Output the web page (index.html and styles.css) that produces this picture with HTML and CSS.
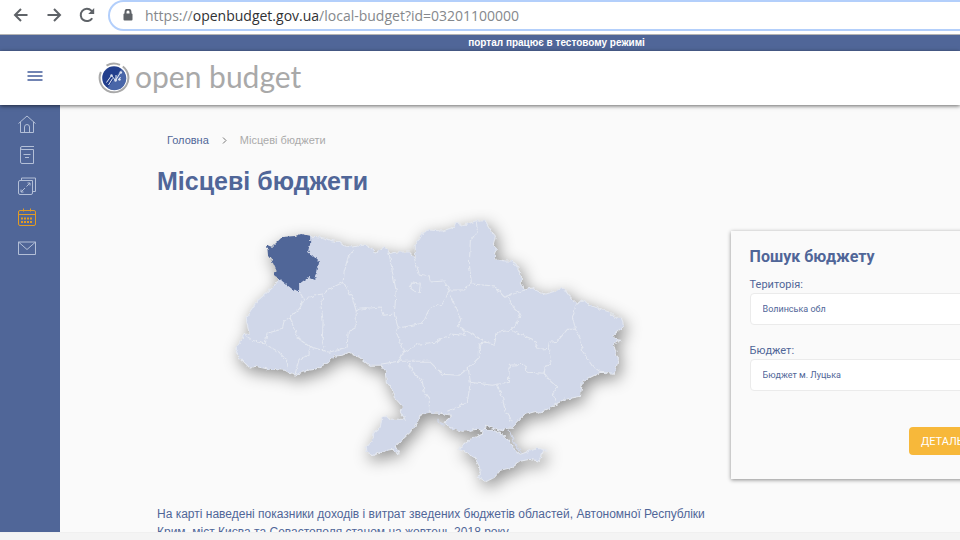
FILE: index.html
```html
<!DOCTYPE html>
<html lang="uk">
<head>
<meta charset="utf-8">
<title>Open Budget</title>
<link rel="stylesheet" href="styles.css">
</head>
<body>
<div class="browser">
  <button class="tool" aria-label="Назад"><svg width="16" height="16" viewBox="0 0 16 16"><path d="M14.500 8H2M8 2L2 8l6 6"/></svg></button>
  <button class="tool" aria-label="Вперед"><svg width="16" height="16" viewBox="0 0 16 16"><path d="M1.500 8H14M8 2l6 6-6 6"/></svg></button>
  <button class="tool" aria-label="Оновити"><svg width="16" height="16" viewBox="0 0 16 16"><path d="M13.200 11.200A6.200 6.200 0 1 1 12.400 3.600L14 5.400"/><path class="solid" d="M15.200 1v6H9.200z"/></svg></button>
  <div class="address">
    <svg class="lock" width="10" height="12" viewBox="0 0 10 12"><rect x="0.500" y="4.500" width="9" height="7" rx="1"/><path d="M2.500 5V3a2.500 2.500 0 0 1 5 0v2"/></svg>
    <span class="url">https://<b>openbudget.gov.ua</b>/local-budget?id=03201100000</span>
  </div>
</div>
<div class="notice">портал працює в тестовому режимі</div>
<header class="header">
  <button class="menu" aria-label="Меню"><svg width="16" height="12" viewBox="0 0 16 12"><path d="M0.500 2h15M0.500 6h15M0.500 10h15"/></svg></button>
  <a class="logo" href="#">
    <svg width="32" height="32" viewBox="0 0 32 32">
      <path class="ring" d="M8.500 3.600A14.400 14.400 0 0 1 22 2.900M24.800 4.500A14.400 14.400 0 1 1 2.900 10"/>
      <circle class="disc" cx="16" cy="16" r="11.800"/>
      <path class="shade" d="M9.500 25.900L23.500 6.900A11.800 11.800 0 0 1 9.500 25.900z"/>
      <path class="graph" d="M8.500 20.500l5-7M10.500 23l4-6.500M13.500 13.500l4 5 5-8M18 13v6M22.500 15l-2 3"/>
      <g class="nodes"><circle cx="13.500" cy="13.500" r="1.200"/><circle cx="17.500" cy="18.500" r="1.200"/><circle cx="22.800" cy="10.500" r="1.300"/><circle cx="21.500" cy="17.500" r="1.200"/></g>
    </svg>
    <span>open budget</span>
  </a>
</header>
<div class="body">
  <nav class="side">
    <a href="#" aria-label="Головна"><svg width="18" height="18" viewBox="0 0 18 18"><path d="M0.500 8.500L9 1l8.500 7.500M2.500 7v10.500h13V7M6.500 17.500V12a2.500 2.500 0 0 1 5 0v5.500"/></svg></a>
    <a href="#" aria-label="Документи"><svg width="18" height="18" viewBox="0 0 18 18"><path d="M16 .500H4a1.500 1.500 0 0 0 0 3h11.500v14H4A1.500 1.500 0 0 1 2.500 16V2M5.500 8.500h7M7 11.500h4"/></svg></a>
    <a href="#" aria-label="Порівняння"><svg width="18" height="18" viewBox="0 0 18 18"><path d="M.500 5A1.500 1.500 0 0 1 2 3.500h12.500V16a1.500 1.500 0 0 1-1.500 1.500H2A1.500 1.500 0 0 1 .500 16zM3.500 3.500V1h14v13.500h-3M8.500 9.500L12 6M9.500 6H12v2.500M7 11l-4 4M3 12.500V15h2.500"/></svg></a>
    <a class="active" href="#" aria-label="Місцеві бюджети"><svg width="18" height="18" viewBox="0 0 18 18"><path d="M2 2.500h14A1.500 1.500 0 0 1 17.500 4v12a1.500 1.500 0 0 1-1.500 1.500H2A1.500 1.500 0 0 1 .500 16V4A1.500 1.500 0 0 1 2 2.500zM.500 6.500h17M5.500 .500v3M12.500 .500v3"/><path class="days" d="M3 10.500h12M3 14h12"/></svg></a>
    <a href="#" aria-label="Пошта"><svg width="18" height="18" viewBox="0 0 18 18"><path d="M.500 3h17v12.500H.500zM.500 3L9 10.500 17.500 3"/></svg></a>
  </nav>
  <main class="main">
    <nav class="crumbs"><a href="#">Головна</a><svg width="5" height="7" viewBox="0 0 5 7"><path d="M1 .500l3 3-3 3"/></svg><span>Місцеві бюджети</span></nav>
    <h1>Місцеві бюджети</h1>
    <div class="columns">
      <section class="overview">
        <svg class="map" viewBox="206 206 464 292" role="img" aria-label="Карта України">
          <defs><filter id="rough" x="-5%" y="-5%" width="110%" height="110%" color-interpolation-filters="sRGB"><feTurbulence type="fractalNoise" baseFrequency="0.250" numOctaves="2" seed="4"/><feDisplacementMap in="SourceGraphic" scale="4" xChannelSelector="R" yChannelSelector="G"/></filter></defs>
          <g class="relief"><g filter="url(#rough)">
            <path class="land" d="M311 235L321 236 330 239 340 241 345 245 353 246 366 244 372 247 376 252 386 245 390 253 397 251 410 251 416 257 416 245 423 232 430 229 443 230 455 226 457 221 463 225 476 220 486 220 492 230 496 235 494 243 497 248 495 253 497 258 506 260 513 260 518 266 522 275 522 282 525 289 533 287 540 291 546 293 556 290 564 287 570 295 578 303 582 299 593 305 601 308 610 311 615 316 622 316 624 325 614 334 615 338 621 339 614 343 616 350 619 358 615 372 601 371 593 375 583 380 581 395 566 398 558 402 550 407 539 412 537 410 526 413 518 421 513 427 508 427 500 429 493 427 486 424 485 430 478 428 463 430 450 426 445 421 453 414 440 412 430 412 421 414 418 421 411 431 396 445 400 453 393 448 383 450 375 454 368 451 367 446 373 440 375 431 381 426 383 416 387 415 391 418 406 418 401 411 403 405 395 396 393 388 387 380 386 370 381 364 370 364 360 356 350 351 343 354 335 355 326 363 316 368 303 370 296 375 286 369 270 368 256 365 251 367 240 356 236 350 245 333 250 333 247 316 258 300 273 287 278 281 283 260z"/>
            <path class="land" d="M484 428L483 433 471 438 459 448 465 450 475 456 480 465 481 473 479 476 487 480 495 476 501 469 513 466 521 460 530 458 541 460 543 451 547 449 538 447 530 450 521 453 515 448 510 440 500 431 493 429z"/>
            <path class="spit" d="M438 418l3 5 5 1M450 427l20 3M509 427l5 13 8 12"/>
            <path class="inner" d="M300 290L305 299 316 294 324 293 330 288 344 281 345 270 349 256 355 249M305 299L300 308 291 316 295 328 300 338 310 345 326 350 330 351 348 346 349 331 357 326 357 310 353 296 344 281M291 316L285 320 283 328 268 332 266 343M245 333L253 339 266 343 280 351 288 360 289 367M310 345V354L300 358 296 373M324 293L322 306 324 320 323 340 326 350M357 310L360 308 381 306 384 314 393 313M390 253L393 270 397 290 395 313 399 327 397 331 405 350 399 360 381 363M399 327L423 322 431 306 443 303 450 290 445 280 431 281 430 275 420 273 415 257M477 220L478 230 471 240 470 263 472 281 465 289 450 289M472 283L495 285 505 296 525 289M510 297L513 306 521 313 516 324 511 329 498 331 495 343 487 341 473 333 458 325 462 320 450 293M405 351L418 343 436 341 453 333 466 334 463 326M399 360L411 360 430 360 443 373 460 374 470 366 480 356 480 343 487 341M410 362L413 370 423 380 425 391 430 398V411M448 410L468 401 471 381 469 366M471 381L493 384 509 381 510 364 525 363 528 371 545 372M498 384L503 396 506 411 513 421M557 400L553 393 558 386 551 380 545 372 546 365 552 363 549 348M511 329L533 338 540 348 549 347 550 341 558 340 568 328 576 328 573 316 577 303M576 328L581 338 583 350 593 365 600 370M410 286L413 282 421 283 420 292 415 290z"/>
            <path class="volyn" d="M268 244L273 246 283 236 296 235 302 233 311 235 311 243 309 251 315 256 320 261 318 271 315 278 310 276 304 280 300 283 300 290 293 288 288 284 283 280 276 276 275 271 278 271 273 260 269 255z"/>
          </g></g>
        </svg>
        <p>На карті наведені показники доходів і витрат зведених бюджетів областей, Автономної Республіки Крим, міст Києва та Севастополя станом на жовтень 2018 року</p>
      </section>
      <form class="search">
        <h2>Пошук бюджету</h2>
        <label for="territory">Територія:</label>
        <input id="territory" type="text" value="Волинська обл">
        <label for="budget">Бюджет:</label>
        <input id="budget" type="text" value="Бюджет м. Луцька">
        <button type="button">ДЕТАЛЬ</button>
      </form>
    </div>
  </main>
</div>
<footer class="footer"></footer>
</body>
</html>
```

FILE: styles.css
```css
* { box-sizing: border-box; }
body { margin: 0; height: 100vh; display: flex; flex-direction: column; overflow: hidden; background: #fafafa; color: #506698; font-family: "Liberation Sans", Arial, sans-serif; }
button { border: 0; padding: 0; background: none; }
svg { display: block; fill: none; }
a { color: inherit; text-decoration: none; }

.browser { flex: none; display: flex; align-items: center; gap: 17px; height: 35px; padding: 0 0 4px 13px; overflow: hidden; background: #fff; border-bottom: 1px solid #b4b4b4; }
.tool svg { stroke: #5f6368; stroke-width: 2; }
.tool .solid { fill: #5f6368; stroke: none; }
.address { flex: 1; display: flex; align-items: center; gap: 12px; height: 31px; margin: 0 -24px 0 -4px; padding-left: 13px; border: 2px solid #b3cffb; border-radius: 16px; }
.lock rect { fill: #5f6368; }
.lock path { stroke: #5f6368; stroke-width: 2; }
.url { color: #85888c; font: 14px "Open Sans", sans-serif; white-space: nowrap; }
.url b { color: #303134; font-weight: 400; }

.notice { flex: none; height: 16px; padding-left: 153px; color: #fff; background: #506698; font: bold 10px/16px "Liberation Sans", Arial, sans-serif; text-align: center; }
.header { position: relative; flex: none; display: flex; align-items: center; height: 54px; padding: 0 28px 4px 27px; background: #fff; box-shadow: 0 1px 4px rgba(0, 0, 0, .6); }
.menu svg { stroke: #7184b3; stroke-width: 2; }
.logo { display: flex; align-items: center; gap: 5px; margin-left: 55px; padding-top: 4px; color: #a9a9a9; font: 30px/28px Lato, sans-serif; }
.logo span { padding-bottom: 4px; }
.ring { stroke: #a9a9a9; stroke-width: 2; }
.disc { fill: #233f8d; }
.shade { fill: #4966a8; }
.graph { stroke: #e8ecf5; stroke-width: 1; }
.nodes { fill: #dce2f0; }

.body { flex: 1; min-height: 0; display: flex; overflow: hidden; }
.side { flex: none; display: flex; flex-direction: column; align-items: center; gap: 13px; width: 60px; padding: 10px 6px 0 0; background: #506698; }
.side svg { stroke: #b3bfd7; stroke-width: 1; }
.side .active svg { stroke: #e29b23; }
.side .days { stroke-width: 2; stroke-dasharray: 2 1; }

.main { flex: 1; min-width: 0; padding: 28px 0 0 97px; }
.crumbs { display: flex; align-items: center; gap: 13px; padding-left: 10px; font-size: 11px; line-height: 14px; }
.crumbs svg { stroke: #777; }
.crumbs span { color: #aaa; }
h1 { margin: 18px 0 10px; font-size: 25px; line-height: 32px; }
.columns { display: grid; grid-template-columns: minmax(0, 5fr) minmax(0, 2fr); align-items: start; }
.overview { min-width: 0; }
.map { width: 81%; margin-left: 48px; overflow: visible; }
.relief { filter: drop-shadow(3px 5px 8px rgba(0, 0, 0, .42)); }
.land, .inner { stroke: #e4e8f0; stroke-width: 1; }
.land, .spit { fill: #d0d7e9; }
.spit { fill: none; stroke: #d0d7e9; }
.volyn { fill: #506698; }
.overview p { margin: 6px 0 0; font-size: 12px; line-height: 18px; }

.search { display: flex; flex-direction: column; margin: 24px -60px 0 0; padding: 16px 19px 24px; background: #fafafa; box-shadow: 0 1px 4px rgba(0, 0, 0, .45); }
h2 { margin: 0 0 10px; font: bold 16px/20px Roboto, sans-serif; }
label { font: 11px/16px Roboto, sans-serif; }
input { width: 100%; height: 32px; margin-bottom: 18px; padding: 0 12px; color: #506698; background: #fff; border: 1px solid #ebebeb; border-radius: 4px; font: 9px Roboto, sans-serif; }
.search button { align-self: flex-end; width: 92px; height: 28px; margin-top: 18px; padding-left: 12px; color: #fff; background: #f7b83a; border-radius: 4px; font: 11px Roboto, sans-serif; text-align: left; }
.footer { flex: none; height: 8px; background: #f4f4f4; border-top: 1px solid #f0f0f0; }
```
